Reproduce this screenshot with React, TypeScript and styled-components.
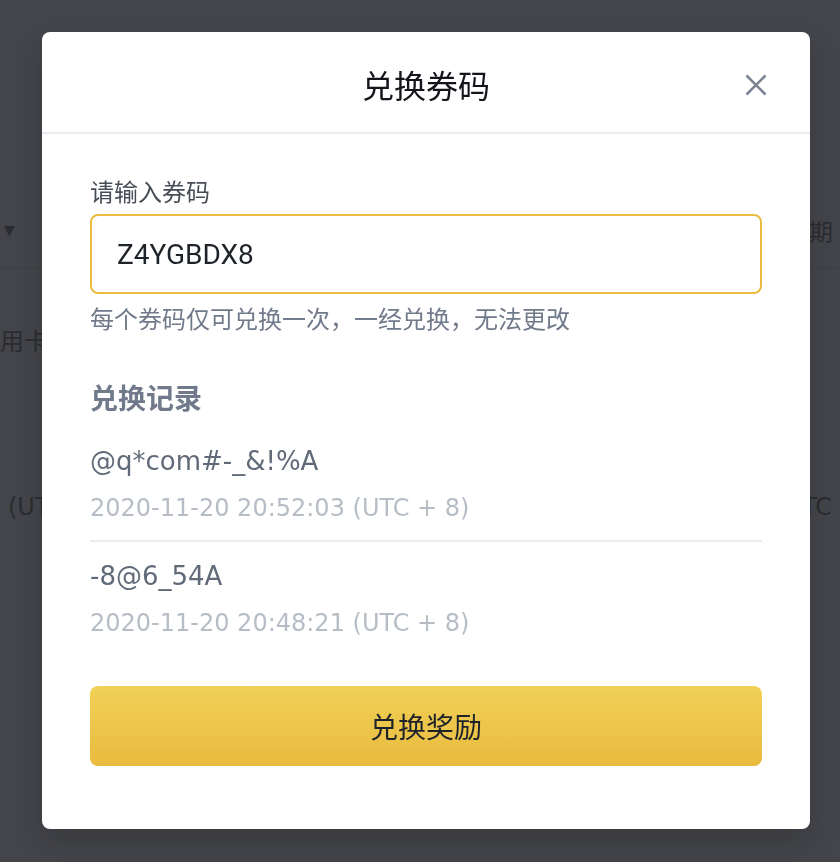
import React from "react";
import styled, { createGlobalStyle } from "styled-components";

const GlobalStyle = createGlobalStyle`
  html, body {
    margin: 0;
    padding: 0;
    background: #44454a;
  }
  body {
    font-family: "DejaVu Sans", "Noto Sans CJK SC", sans-serif;
    overflow: hidden;
  }
  * { box-sizing: border-box; }
`;

/* ---------- faint page underneath the mask ---------- */
const PageBehind = styled.div`
  width: 840px;
  height: 862px;
  overflow: hidden;
  display: flex;
  flex-direction: column;
  color: #2b2c30;
  font-family: "DejaVu Sans", "Noto Sans CJK SC", sans-serif;
`;

const BehindRow = styled.div<{ $top: number }>`
  margin-top: ${(p) => p.$top}px;
  height: 36px;
  display: flex;
  align-items: center;
  justify-content: space-between;
  font-size: 24px;
  white-space: nowrap;
`;

const BehindLine = styled.div<{ $top: number }>`
  margin-top: ${(p) => p.$top}px;
  height: 1px;
  background: #3f4044;
`;

const BehindText = styled.span<{ $shift?: number; $size?: number }>`
  margin-left: ${(p) => p.$shift ?? 0}px;
  font-size: ${(p) => p.$size ?? 24}px;
`;

const BehindRight = styled.span<{ $pad: number }>`
  padding-right: ${(p) => p.$pad}px;
  font-size: 24px;
`;

/* ---------- modal ---------- */
const Overlay = styled.div`
  position: fixed;
  inset: 0;
  display: flex;
  align-items: flex-start;
  padding: 32px 30px 0 42px;
`;

const Modal = styled.div`
  width: 768px;
  background: #ffffff;
  border-radius: 8px;
  box-shadow: 0 14px 30px rgba(0, 0, 0, 0.16);
  display: flex;
  flex-direction: column;
`;

const Header = styled.div`
  height: 102px;
  padding: 4px 43px 0 43px;
  border-bottom: 2px solid #eaecef;
  display: grid;
  grid-template-columns: 1fr auto 1fr;
  align-items: center;
`;

const Title = styled.h2`
  grid-column: 2;
  margin: 0;
  font-family: "Noto Sans CJK SC", sans-serif;
  font-size: 32px;
  font-weight: 400;
  line-height: 40px;
  color: #14151a;
`;

const CloseButton = styled.button`
  grid-column: 3;
  justify-self: end;
  width: 22px;
  height: 22px;
  margin-top: 2px;
  padding: 0;
  border: none;
  background: none;
  display: flex;
  cursor: pointer;
`;

const Body = styled.div`
  padding: 39px 48px 63px;
  display: flex;
  flex-direction: column;
`;

const Label = styled.label`
  font-family: "Noto Sans CJK SC", sans-serif;
  font-size: 24px;
  line-height: 36px;
  color: #474d57;
`;

const InputBox = styled.div`
  margin-top: 5px;
  height: 80px;
  border: 2px solid #e9bc40;
  border-radius: 8px;
  padding: 0 25px;
  display: flex;
  align-items: center;
`;

const CodeInput = styled.input`
  width: 100%;
  border: none;
  outline: none;
  padding: 0;
  background: transparent;
  font-family: Roboto, sans-serif;
  font-size: 28px;
  color: #1e2329;
`;

const Hint = styled.p`
  margin: 6px 0 0;
  font-family: "Noto Sans CJK SC", sans-serif;
  font-size: 24px;
  line-height: 36px;
  color: #707a8a;
`;

const SectionTitle = styled.h3`
  margin: 41px 0 0;
  font-family: "Noto Sans CJK SC", sans-serif;
  font-size: 28px;
  line-height: 40px;
  font-weight: 700;
  color: #707a8a;
`;

const RecordList = styled.div`
  margin-top: 10px;
  display: flex;
  flex-direction: column;
`;

const Record = styled.div`
  padding: 14px 0;
  display: flex;
  flex-direction: column;
  gap: 9px;
  border-bottom: 2px solid #eaecef;
  &:last-child {
    border-bottom: none;
  }
`;

const RecordCode = styled.div`
  font-family: "DejaVu Sans", sans-serif;
  font-size: 26px;
  line-height: 40px;
  color: #616a78;
`;

const RecordTime = styled.div`
  font-family: "DejaVu Sans", sans-serif;
  font-size: 24px;
  line-height: 36px;
  color: #b7bdc6;
`;

const SubmitButton = styled.button`
  margin-top: 31px;
  height: 80px;
  width: 100%;
  border: none;
  border-radius: 8px;
  background: linear-gradient(180deg, #f1d157 0%, #e9ba3e 100%);
  font-family: "Noto Sans CJK SC", sans-serif;
  font-size: 28px;
  color: #1e2329;
  cursor: pointer;
`;

const CloseIcon = () => (
  <svg width="22" height="22" viewBox="0 0 22 22" fill="none">
    <path d="M1.5 1.5L20.5 20.5M20.5 1.5L1.5 20.5" stroke="#7b8492" strokeWidth="2.6" />
  </svg>
);

const records = [
  { code: "@q*com#-_&!%A", time: "2020-11-20 20:52:03 (UTC + 8)" },
  { code: "-8@6_54A", time: "2020-11-20 20:48:21 (UTC + 8)" },
];

export default function App() {
  return (
    <>
      <GlobalStyle />
      <PageBehind>
        <BehindRow $top={212}>
          <BehindText $shift={4} $size={14}>▼</BehindText>
          <BehindRight $pad={7}>期</BehindRight>
        </BehindRow>
        <BehindLine $top={20} />
        <BehindRow $top={52}>
          <BehindText $shift={0}>用卡</BehindText>
        </BehindRow>
        <BehindRow $top={132}>
          <BehindText $shift={8}>(UTC</BehindText>
          <BehindRight $pad={8}>(UTC</BehindRight>
        </BehindRow>
      </PageBehind>
      <Overlay>
        <Modal>
          <Header>
            <Title>兑换券码</Title>
            <CloseButton aria-label="close">
              <CloseIcon />
            </CloseButton>
          </Header>
          <Body>
            <Label>请输入券码</Label>
            <InputBox>
              <CodeInput defaultValue="Z4YGBDX8" />
            </InputBox>
            <Hint>每个券码仅可兑换一次，一经兑换，无法更改</Hint>
            <SectionTitle>兑换记录</SectionTitle>
            <RecordList>
              {records.map((r) => (
                <Record key={r.code}>
                  <RecordCode>{r.code}</RecordCode>
                  <RecordTime>{r.time}</RecordTime>
                </Record>
              ))}
            </RecordList>
            <SubmitButton>兑换奖励</SubmitButton>
          </Body>
        </Modal>
      </Overlay>
    </>
  );
}
